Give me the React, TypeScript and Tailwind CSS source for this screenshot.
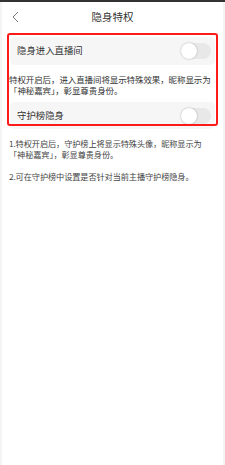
import React from "react";

function Toggle() {
  return (
    <div className="w-[30px] h-[16px] rounded-full bg-[#e8e8e8] relative shrink-0">
      <div className="absolute left-0 top-0 w-[16px] h-[16px] rounded-full bg-white shadow-[0_0_2px_rgba(0,0,0,0.3)]" />
    </div>
  );
}

export default function App() {
  const font = { fontFamily: '"Noto Sans CJK SC", "Noto Sans", sans-serif' };
  return (
    <div
      className="w-[225px] h-[465px] bg-[#f4f4f4] border-t-[2px] border-[#333333] flex flex-col relative overflow-hidden"
      style={font}
    >
      <div className="mx-[2px] flex-1 bg-white flex flex-col">
        <div className="h-[30px] flex items-center relative">
          <svg className="absolute left-[9px] top-[9px]" width="9" height="12" viewBox="0 0 9 12">
            <path d="M7 1 L2 6 L7 11" fill="none" stroke="#777" strokeWidth="1" />
          </svg>
          <div className="w-full text-center text-[10.5px] text-[#333] leading-none">隐身特权</div>
        </div>
        <div className="px-[8px] pt-[5px]">
          <div className="h-[28px] rounded-[5px] bg-[#f6f6f6] flex items-center justify-between pl-[7px] pr-[4px]">
            <span className="text-[9.4px] text-[#333] leading-none">隐身进入直播间</span>
            <Toggle />
          </div>
        </div>
        <div className="pl-[7px] pr-[4px] pt-[9px] text-[8.5px] leading-[11px] text-[#333] tracking-[-0.1px]">
          <div>特权开启后，进入直播间将显示特殊效果，昵称显示为</div>
          <div>「神秘嘉宾」，彰显尊贵身份。</div>
        </div>
        <div className="px-[8px] pt-[6px]">
          <div className="h-[27px] rounded-[5px] bg-[#f6f6f6] flex items-center justify-between pl-[7px] pr-[4px]">
            <span className="text-[9.4px] text-[#333] leading-none">守护榜隐身</span>
            <Toggle />
          </div>
        </div>
        <div className="pl-[7px] pr-[4px] pt-[9px] text-[8.2px] leading-[11px] text-[#444] tracking-[-0.1px]">
          <div>1.特权开启后，守护榜上将显示特殊头像，昵称显示为</div>
          <div>「神秘嘉宾」，彰显尊贵身份。</div>
          <div className="mt-[11px]">2.可在守护榜中设置是否针对当前主播守护榜隐身。</div>
        </div>
      </div>
      <div className="absolute left-[7px] top-[31px] w-[211px] h-[93px] border-[2px] border-[#ff1a1a] rounded-[3px] pointer-events-none" />
    </div>
  );
}
